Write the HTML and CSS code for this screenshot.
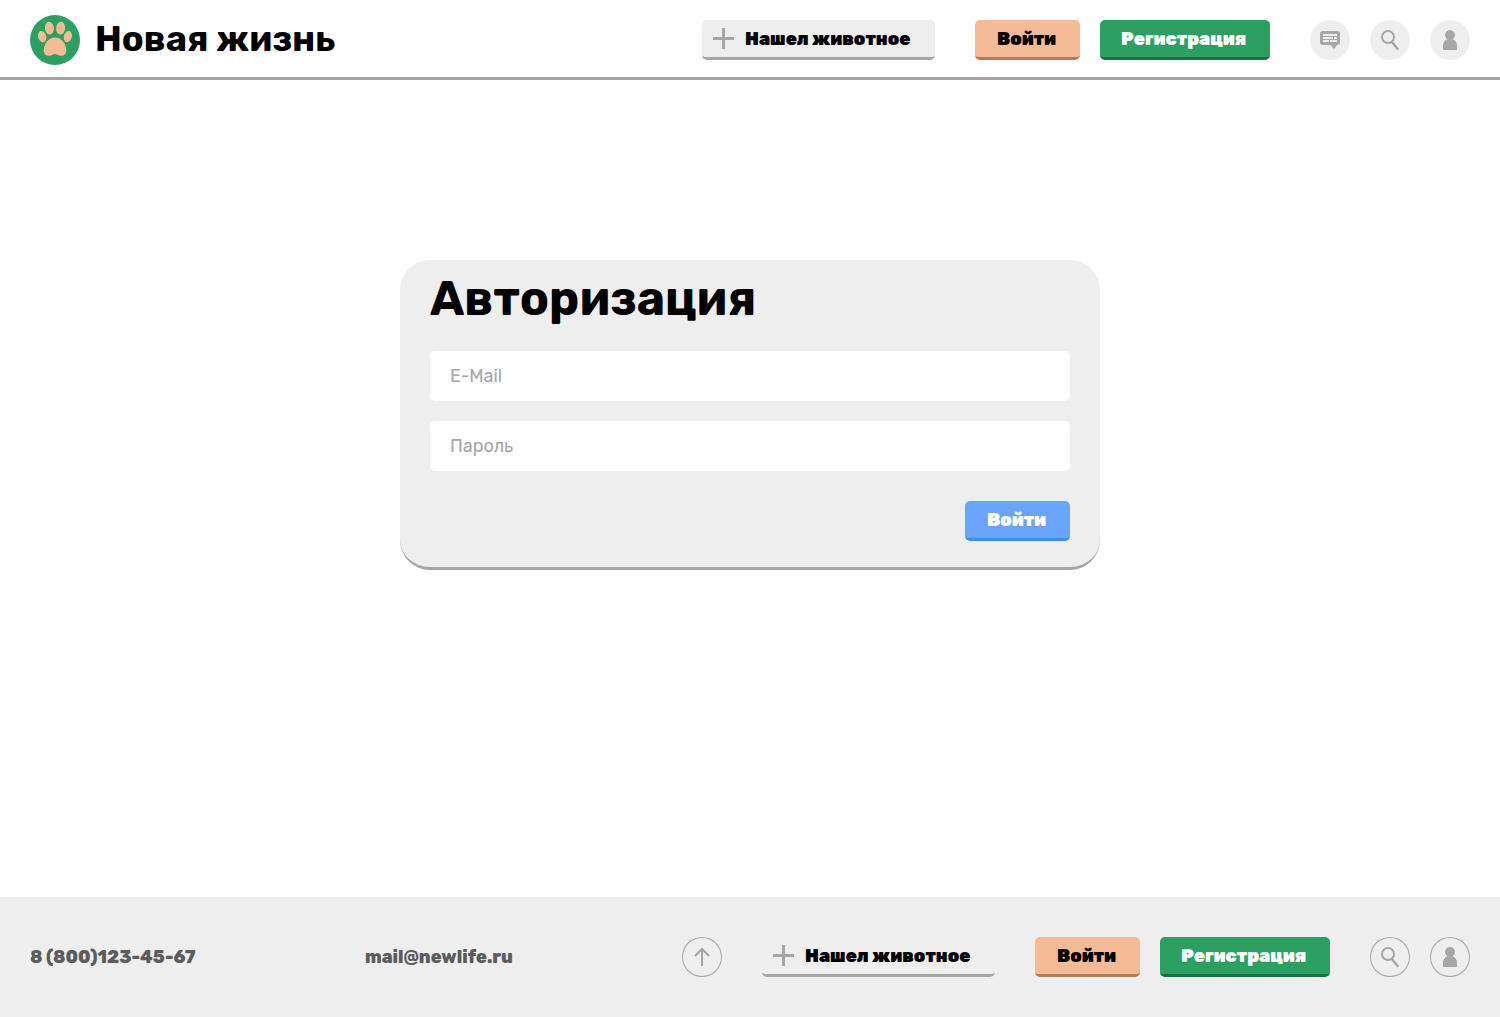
FILE: index.html
```html
<!DOCTYPE html>
<html lang="ru">
<head>
<meta charset="utf-8">
<title>Новая жизнь</title>
<link rel="stylesheet" href="styles.css">
</head>
<body>
<svg class="sprite" aria-hidden="true">
  <symbol id="plus" viewBox="0 0 21 21"><path d="M0 10.5H21M10.5 0V21" fill="none" stroke="#a6a6a6" stroke-width="3"/></symbol>
  <symbol id="search" viewBox="0 0 40 40"><g fill="none" stroke="#a6a6a6"><circle cx="18" cy="17" r="6" stroke-width="2"/><path d="M21.9 21.9L28.2 29.8" stroke-width="2.4"/></g></symbol>
  <symbol id="user" viewBox="0 0 40 40"><path d="M13 30V26Q13 21 17.4 19.2A5 5 0 1 1 22.6 19.2Q27 21 27 26V30Z" fill="#a6a6a6"/></symbol>
</svg>
<header class="header">
  <a class="logo">
    <svg width="50" height="50" viewBox="0 0 50 50"><circle cx="25" cy="25" r="25" fill="#2ca062"/><g fill="#f5bb97"><ellipse cx="19.4" cy="13.2" rx="4.5" ry="6.4" transform="rotate(-5 19.4 13.2)"/><ellipse cx="30.6" cy="13.2" rx="4.5" ry="6.4" transform="rotate(5 30.6 13.2)"/><ellipse cx="12.2" cy="21.6" rx="4" ry="5.8" transform="rotate(-16 12.2 21.6)"/><ellipse cx="37.8" cy="21.6" rx="4" ry="5.8" transform="rotate(16 37.8 21.6)"/><path d="M25 22.5C31.5 22.5 36.3 29 36.3 35.5C36.3 39.6 33.3 41.2 29.8 40.7C27.8 40.3 26.8 39 25 39C23.2 39 22.2 40.3 20.2 40.7C16.7 41.2 13.7 39.6 13.7 35.5C13.7 29 18.5 22.5 25 22.5Z"/></g></svg>
    <span class="brand">Новая жизнь</span>
  </a>
  <nav class="actions">
    <button class="btn found"><svg width="21" height="21"><use href="#plus"/></svg><span>Нашел животное</span></button>
    <div class="auth">
      <button class="btn login">Войти</button>
      <button class="btn register">Регистрация</button>
    </div>
    <div class="icons">
      <a class="icon"><svg width="40" height="40" viewBox="0 0 40 40"><path d="M13 11H27Q30 11 30 14V22Q30 25 27 25L24 29L21 25H13Q10 25 10 22V14Q10 11 13 11Z" fill="#a6a6a6"/><path d="M13 15H27M13 18H23M24 18H27M13 21H19M20 21H27" stroke="#eee" stroke-width="2"/></svg></a>
      <a class="icon"><svg width="40" height="40"><use href="#search"/></svg></a>
      <a class="icon"><svg width="40" height="40"><use href="#user"/></svg></a>
    </div>
  </nav>
</header>
<main class="main">
  <form class="card">
    <h1 class="title">Авторизация</h1>
    <input class="field" type="email" placeholder="E-Mail">
    <input class="field" type="password" placeholder="Пароль">
    <button class="btn submit" type="button">Войти</button>
  </form>
</main>
<footer class="footer">
  <a class="contact phone">8 (800)123-45-67</a>
  <a class="contact">mail@newlife.ru</a>
  <div class="actions">
    <a class="icon outline"><svg width="40" height="40" viewBox="0 0 40 40"><path d="M20 29V12M13 19L20 12L27 19" fill="none" stroke="#a6a6a6" stroke-width="2"/></svg></a>
    <button class="btn found"><svg width="21" height="21"><use href="#plus"/></svg><span>Нашел животное</span></button>
    <div class="auth">
      <button class="btn login">Войти</button>
      <button class="btn register">Регистрация</button>
    </div>
    <div class="icons">
      <a class="icon outline"><svg width="40" height="40"><use href="#search"/></svg></a>
      <a class="icon outline"><svg width="40" height="40"><use href="#user"/></svg></a>
    </div>
  </div>
</footer>
</body>
</html>
```
FILE: styles.css
```css
* { box-sizing: border-box; }
body {
  margin: 0;
  min-height: 100vh;
  display: flex;
  flex-direction: column;
  background: #fff;
  color: #000;
  font-family: Rubik, Inter, sans-serif;
}
.sprite { position: absolute; width: 0; height: 0; }
svg { display: block; flex: none; }
.header {
  height: 80px;
  padding: 0 30px;
  border-bottom: 3px solid #a6a6a6;
  display: flex;
  align-items: center;
  justify-content: space-between;
}
.header > * { margin-top: 3px; }
.logo { display: flex; align-items: center; gap: 15px; }
.brand { font-size: 36px; font-weight: 700; line-height: 46px; padding-bottom: 3px; white-space: nowrap; }
.actions { display: flex; gap: 40px; }
.auth, .icons { display: flex; gap: 20px; }
.btn {
  height: 40px;
  padding: 0;
  border: 0;
  border-bottom: 3px solid;
  border-radius: 5px;
  display: flex;
  align-items: center;
  font: 900 18px/24px Rubik, Inter, sans-serif;
  color: #000;
  white-space: nowrap;
}
.found { width: 233px; padding-left: 11px; gap: 11px; background: #eee; border-color: #a6a6a6; }
.login, .submit { width: 105px; padding-left: 22px; }
.login { background: #f5bb97; border-color: #b07c5c; }
.register { width: 170px; padding-left: 21px; background: #2ca062; border-color: #1d6d42; color: #fff; }
.icon { width: 40px; height: 40px; border-radius: 50%; background: #eee; }
.outline { background: none; box-shadow: inset 0 0 0 1px #a6a6a6; }
.main { flex: 1; padding-top: 180px; }
.card {
  width: 700px;
  height: 310px;
  margin: 0 auto;
  padding: 10px 30px 0;
  border-radius: 30px;
  border-bottom: 3px solid #a6a6a6;
  background: #eee;
  display: flex;
  flex-direction: column;
}
.title { margin: 0 0 24px; font-size: 48px; line-height: 57px; font-weight: 700; white-space: nowrap; }
.field {
  height: 50px;
  flex: none;
  margin-bottom: 20px;
  padding: 0 20px;
  border: 0;
  border-radius: 5px;
  background: #fff;
  font: 400 18px Rubik, Inter, sans-serif;
}
.field::placeholder { color: #a6a6a6; opacity: 1; }
.submit { flex: none; margin-top: 10px; align-self: flex-end; background: #6ba4ff; border-color: #438af5; color: #fff; }
.footer { height: 120px; padding: 0 30px; background: #eee; display: flex; align-items: center; }
.footer .actions { margin-left: auto; }
.contact { font-size: 18px; line-height: 24px; font-weight: 800; color: #5c5c5c; white-space: nowrap; }
.phone { width: 335px; }
```
